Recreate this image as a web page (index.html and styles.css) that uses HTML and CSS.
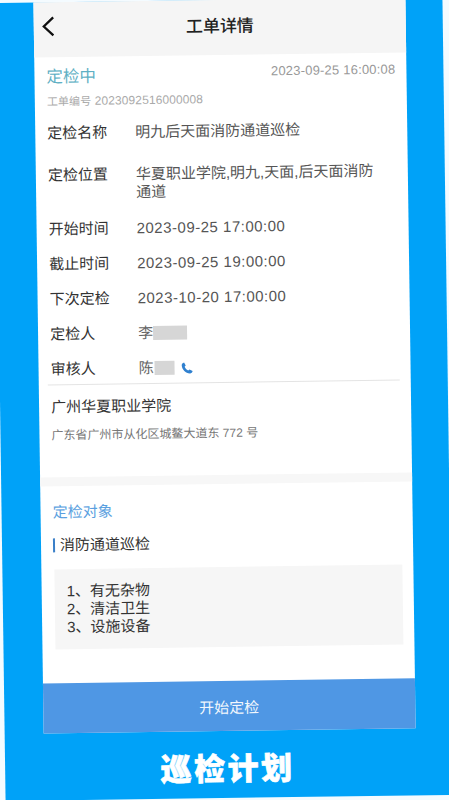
FILE: index.html
```html
<!DOCTYPE html>
<html lang="zh-CN">
<head>
<meta charset="utf-8">
<title>工单详情</title>
<link rel="stylesheet" href="styles.css">
</head>
<body>
<div class="poster">
  <div class="phone">
    <header class="nav">
      <svg class="back" viewBox="0 0 14 22" width="14" height="22"><path d="M12.5 2 L3 11 L12.5 20" fill="none" stroke="#111" stroke-width="2.3"/></svg>
      <h1>工单详情</h1>
    </header>
    <section class="info">
      <div class="status"><span class="state">定检中</span><span class="stamp">2023-09-25 16:00:08</span></div>
      <div class="order"><span class="order-label">工单编号</span> 2023092516000008</div>
      <dl class="fields">
        <div class="row name"><dt>定检名称</dt><dd>明九后天面消防通道巡检</dd></div>
        <div class="row place"><dt>定检位置</dt><dd>华夏职业学院,明九,天面,后天面消防通道</dd></div>
        <div class="row"><dt>开始时间</dt><dd class="date">2023-09-25 17:00:00</dd></div>
        <div class="row"><dt>截止时间</dt><dd class="date">2023-09-25 19:00:00</dd></div>
        <div class="row"><dt>下次定检</dt><dd class="date">2023-10-20 17:00:00</dd></div>
        <div class="row"><dt>定检人</dt><dd class="person">李<i class="mask wide"></i></dd></div>
        <div class="row last"><dt>审核人</dt><dd class="person">陈<i class="mask"></i><svg class="tel" viewBox="0 0 24 24" width="13" height="13"><path d="M6.6 1.8 9.6 7.4 7.5 9.8C8.6 12.6 11 15.4 14 16.6L16.4 14.6 22.2 17.8C21.6 20.4 19.6 22.4 17 22.2 9.4 21.4 2.8 14.4 2.2 7 2.2 4.4 4 2.4 6.6 1.8Z" fill="#2f80cf"/></svg></dd></div>
      </dl>
      <div class="org">
        <div class="org-name">广州华夏职业学院</div>
        <div class="org-addr">广东省广州市从化区城鳌大道东 772 号</div>
      </div>
    </section>
    <section class="target">
      <h2>定检对象</h2>
      <h3>消防通道巡检</h3>
      <div class="items">
        <p>1、有无杂物</p>
        <p>2、清洁卫生</p>
        <p>3、设施设备</p>
      </div>
    </section>
    <button class="start">开始定检</button>
  </div>
  <div class="caption">巡检计划</div>
</div>
</body>
</html>
```
FILE: styles.css
```css
* { box-sizing: border-box; margin: 0; padding: 0; }
html, body { width: 449px; height: 800px; overflow: hidden; background: #f4fbff; }
body { font-family: "Liberation Sans", "Noto Sans CJK SC", sans-serif; }
.poster {
  width: 448px; height: 798px;
  background: #00a2f8;
  transform: rotate(-0.8deg);
  transform-origin: 50% 50%;
}
.phone { width: 372px; height: 731px; margin-left: 39px; background: #fff; display: flex; flex-direction: column; }
.nav { height: 55px; flex: none; background: #f5f5f5; display: flex; align-items: center; justify-content: center; position: relative; padding-bottom: 7px; }
.nav h1 { font-size: 17px; font-weight: 500; color: #222; }
.back { position: absolute; left: 7px; top: 13px; }
.info { padding: 0 11px 35px 9px; }
.status { display: flex; justify-content: space-between; align-items: center; height: 20px; margin-top: 8px; padding-left: 3px; }
.state { font-size: 16.5px; color: #5fb0c4; }
.stamp { font-size: 13px; color: #999; letter-spacing: .2px; padding-bottom: 3px; }
.order { font-size: 12px; line-height: 14px; color: #aaa; margin: 9px 0 0 3px; letter-spacing: .1px; }
.order-label { font-size: 11px; }
.fields { margin-top: 7px; padding-left: 3px; border-bottom: 1px solid #e4e4e4; }
.row { display: flex; font-size: 15px; line-height: 18px; padding: 8.5px 0; }
.row.name { padding-bottom: 15.5px; }
.row.place { padding-bottom: 10px; }
.row.last { padding-bottom: 5.5px; }
dt { width: 88px; flex: none; color: #333; }
dd { color: #555; max-width: 248px; }
dd.date { letter-spacing: .5px; }
dd.person { display: flex; align-items: center; color: #666; }
.mask { display: block; width: 20px; height: 14px; margin-left: 1px; background: #d6d6d6; }
.mask.wide { width: 34px; margin-left: 0; }
.tel { margin-left: 6px; }
.org { padding: 13px 0 0 3px; }
.org-name { font-size: 15px; line-height: 18px; color: #333; }
.org-addr { font-size: 12px; line-height: 14px; color: #777; margin-top: 12px; }
.target { flex: 1; border-top: 9.5px solid #f7f7f7; padding: 17px 11px 0 12px; }
h2 { font-size: 15px; line-height: 18px; font-weight: 400; color: #5a9fe0; }
h3 { font-size: 15px; font-weight: 400; color: #333; margin-top: 17px; border-left: 2px solid #3a7fc8; padding-left: 5px; line-height: 14px; }
.items { margin: 17px 0 0 1px; height: 80px; background: #f6f6f6; padding: 13px 12px; font-size: 15px; line-height: 18px; color: #333; }
.start { height: 50px; flex: none; border: none; background: #4f97e4; color: #f2f7fd; font: inherit; font-size: 15px; }
.caption { text-align: center; font-size: 31px; line-height: 40px; font-weight: 900; color: #fff; letter-spacing: 2.5px; margin-top: 16px; padding-right: 3px; font-family: "Noto Sans CJK SC", sans-serif; -webkit-text-stroke: .6px #fff; }
```
